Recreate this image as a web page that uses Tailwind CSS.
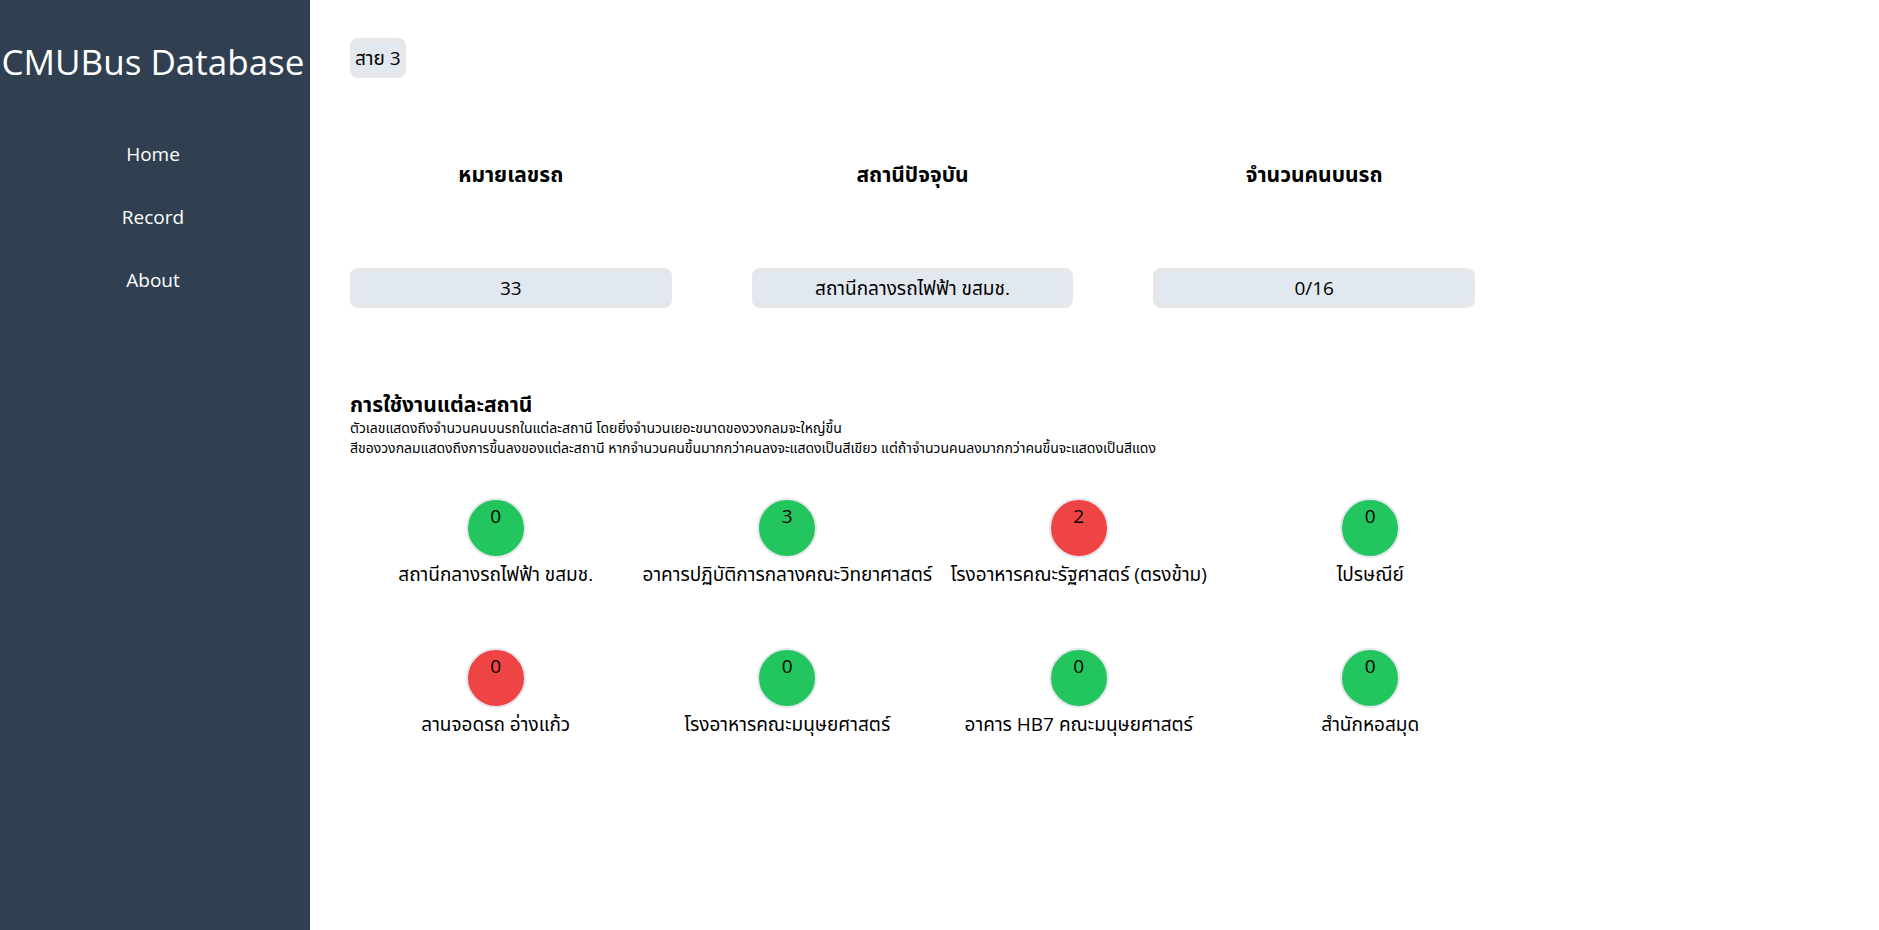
<!DOCTYPE html>
<html lang="th">
<head>
<meta charset="utf-8">
<title>CMUBus Database</title>
<script src="https://cdn.jsdelivr.net/npm/@tailwindcss/browser@4"></script>
</head>
<body class="flex min-h-screen bg-white text-[19px] leading-7 text-black font-['Segoe_UI','Open_Sans','Noto_Sans_Thai','Leelawadee_UI',sans-serif]">
<aside class="w-[310px] shrink-0 bg-[#304050] text-center text-white">
  <h1 class="mt-10 mr-1 whitespace-nowrap text-[35px] leading-[44px]">CMUBus Database</h1>
  <nav class="mt-14 mr-1 flex flex-col items-center gap-[35px]">
    <a href="#">Home</a>
    <a href="#">Record</a>
    <a href="#">About</a>
  </nav>
</aside>
<main class="min-w-0 flex-1 pl-10 pt-[38px]">
  <button class="block rounded-lg border-[5px] border-gray-200 bg-slate-200 leading-[30px] whitespace-nowrap">สาย 3</button>
  <section class="mt-[82px] grid max-w-[1125px] grid-cols-3 gap-x-20 gap-y-20 text-center">
    <h2 class="text-[21px] leading-7 font-bold">หมายเลขรถ</h2>
    <h2 class="text-[21px] leading-7 font-bold">สถานีปัจจุบัน</h2>
    <h2 class="text-[21px] leading-7 font-bold">จำนวนคนบนรถ</h2>
    <div class="rounded-lg border-[5px] border-gray-200 bg-slate-200 leading-[30px]">33</div>
    <div class="rounded-lg border-[5px] border-gray-200 bg-slate-200 leading-[30px]">สถานีกลางรถไฟฟ้า ขสมช.</div>
    <div class="rounded-lg border-[5px] border-gray-200 bg-slate-200 leading-[30px]">0/16</div>
  </section>
  <section class="mt-[82px]">
    <h2 class="text-[21px] leading-7 font-bold">การใช้งานแต่ละสถานี</h2>
    <p class="text-sm">ตัวเลขแสดงถึงจำนวนคนบนรถในแต่ละสถานี โดยยิ่งจำนวนเยอะขนาดของวงกลมจะใหญ่ขึ้น</p>
    <p class="text-sm">สีของวงกลมแสดงถึงการขึ้นลงของแต่ละสถานี หากจำนวนคนขึ้นมากกว่าคนลงจะแสดงเป็นสีเขียว แต่ถ้าจำนวนคนลงมากกว่าคนขึ้นจะแสดงเป็นสีแดง</p>
    <ul class="mt-10 grid max-w-[1166px] grid-cols-4 gap-y-[60px] text-center whitespace-nowrap">
      <li class="flex flex-col items-center gap-0.5"><span class="size-[60px] rounded-full border-2 border-gray-200 bg-[#22c55e] pt-0.5">0</span><span>สถานีกลางรถไฟฟ้า ขสมช.</span></li>
      <li class="flex flex-col items-center gap-0.5"><span class="size-[60px] rounded-full border-2 border-gray-200 bg-[#22c55e] pt-0.5">3</span><span>อาคารปฏิบัติการกลางคณะวิทยาศาสตร์</span></li>
      <li class="flex flex-col items-center gap-0.5"><span class="size-[60px] rounded-full border-2 border-gray-200 bg-[#ef4444] pt-0.5">2</span><span>โรงอาหารคณะรัฐศาสตร์ (ตรงข้าม)</span></li>
      <li class="flex flex-col items-center gap-0.5"><span class="size-[60px] rounded-full border-2 border-gray-200 bg-[#22c55e] pt-0.5">0</span><span>ไปรษณีย์</span></li>
      <li class="flex flex-col items-center gap-0.5"><span class="size-[60px] rounded-full border-2 border-gray-200 bg-[#ef4444] pt-0.5">0</span><span>ลานจอดรถ อ่างแก้ว</span></li>
      <li class="flex flex-col items-center gap-0.5"><span class="size-[60px] rounded-full border-2 border-gray-200 bg-[#22c55e] pt-0.5">0</span><span>โรงอาหารคณะมนุษยศาสตร์</span></li>
      <li class="flex flex-col items-center gap-0.5"><span class="size-[60px] rounded-full border-2 border-gray-200 bg-[#22c55e] pt-0.5">0</span><span>อาคาร HB7 คณะมนุษยศาสตร์</span></li>
      <li class="flex flex-col items-center gap-0.5"><span class="size-[60px] rounded-full border-2 border-gray-200 bg-[#22c55e] pt-0.5">0</span><span>สำนักหอสมุด</span></li>
    </ul>
  </section>
</main>
</body>
</html>
